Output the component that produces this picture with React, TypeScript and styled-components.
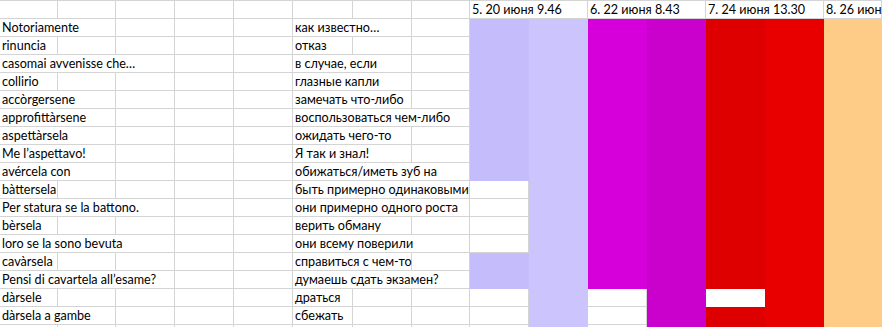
import React from "react";
import styled, { createGlobalStyle } from "styled-components";

const GlobalStyle = createGlobalStyle`
  html, body {
    margin: 0;
    padding: 0;
    background: #fff;
  }
  body {
    font-family: Lato, "Open Sans", sans-serif;
  }
`;

const COLS = [58, 58, 59, 59, 59, 60, 59, 58, 59, 59, 59, 59, 59, 59, 58];
const GRID = "#d4d4d4";

const Sheet = styled.div`
  display: grid;
  grid-template-columns: ${COLS.map((w) => w + "px").join(" ")};
  grid-auto-rows: 18px;
  width: 882px;
  height: 327px;
  overflow: hidden;
  box-sizing: border-box;
  border-top: 1px solid ${GRID};
`;

const Cell = styled.div<{ $span?: number; $fill?: string }>`
  grid-column: span ${(p) => p.$span ?? 1};
  box-sizing: border-box;
  border-right: 1px solid ${(p) => p.$fill ?? GRID};
  border-bottom: 1px solid ${(p) => p.$fill ?? GRID};
  background: ${(p) => p.$fill ?? "transparent"};
  padding: 0 2px;
  font-size: 12.6px;
  line-height: 17px;
  color: #000;
  white-space: nowrap;
  overflow: visible;
`;

const P1 = "#c5bcfb";
const P2 = "#ccc5fd";
const M1 = "#d600da";
const M2 = "#ca00cd";
const R1 = "#de0000";
const R2 = "#e80000";
const OR = "#ffcc88";
const WH = "#ffffff";

type Entry = { it: string; itSpan: number; ru: string; ruSpan: number };

const entries: Entry[] = [
  { it: "Notoriamente", itSpan: 2, ru: "как известно…", ruSpan: 2 },
  { it: "rinuncia", itSpan: 1, ru: "отказ", ruSpan: 1 },
  { it: "casomai avvenisse che…", itSpan: 3, ru: "в случае, если", ruSpan: 2 },
  { it: "collirio", itSpan: 1, ru: "глазные капли", ruSpan: 2 },
  { it: "accòrgersene", itSpan: 2, ru: "замечать что-либо", ruSpan: 2 },
  { it: "approfittàrsene", itSpan: 2, ru: "воспользоваться чем-либо", ruSpan: 3 },
  { it: "aspettàrsela", itSpan: 2, ru: "ожидать чего-то", ruSpan: 2 },
  { it: "Me l’aspettavo!", itSpan: 2, ru: "Я так и знал!", ruSpan: 2 },
  { it: "avércela con", itSpan: 2, ru: "обижаться/иметь зуб на", ruSpan: 3 },
  { it: "bàttersela", itSpan: 1, ru: "быть примерно одинаковыми", ruSpan: 3 },
  { it: "Per statura se la battono.", itSpan: 3, ru: "они примерно одного роста", ruSpan: 3 },
  { it: "bèrsela", itSpan: 1, ru: "верить обману", ruSpan: 2 },
  { it: "loro se la sono bevuta", itSpan: 3, ru: "они всему поверили", ruSpan: 3 },
  { it: "cavàrsela", itSpan: 1, ru: "справиться с чем-то", ruSpan: 2 },
  { it: "Pensi di cavartela all’esame?", itSpan: 3, ru: "думаешь сдать экзамен?", ruSpan: 3 },
  { it: "dàrsele", itSpan: 1, ru: "драться", ruSpan: 1 },
  { it: "dàrsela a gambe", itSpan: 2, ru: "сбежать", ruSpan: 1 },
  { it: "", itSpan: 1, ru: "", ruSpan: 1 },
];

// fills for columns 8..14, per data row (0-based)
function fillsFor(i: number): (string | undefined)[] {
  const purpleBlank = (i >= 9 && i <= 12) || i >= 15;
  return [
    purpleBlank ? undefined : P1,
    P2,
    i >= 15 ? undefined : M1,
    M2,
    i === 15 ? WH : R1,
    R2,
    OR,
  ];
}

const headers = [
  { text: "5. 20 июня 9.46", span: 2 },
  { text: "6. 22 июня 8.43", span: 2 },
  { text: "7. 24 июня 13.30", span: 2 },
  { text: "8. 26 июня", span: 1 },
];

function blanks(n: number, key: string) {
  return Array.from({ length: n }, (_, k) => <Cell key={key + k} />);
}

export default function App() {
  return (
    <>
      <GlobalStyle />
      <Sheet>
        {blanks(8, "h")}
        {headers.map((h) => (
          <Cell key={h.text} $span={h.span}>
            {h.text}
          </Cell>
        ))}
        {entries.map((e, i) => (
          <React.Fragment key={i}>
            <Cell $span={e.itSpan}>{e.it}</Cell>
            {blanks(5 - e.itSpan, `a${i}-`)}
            <Cell $span={e.ruSpan}>{e.ru}</Cell>
            {blanks(3 - e.ruSpan, `b${i}-`)}
            {fillsFor(i).map((f, k) => (
              <Cell key={k} $fill={f} />
            ))}
          </React.Fragment>
        ))}
      </Sheet>
    </>
  );
}
